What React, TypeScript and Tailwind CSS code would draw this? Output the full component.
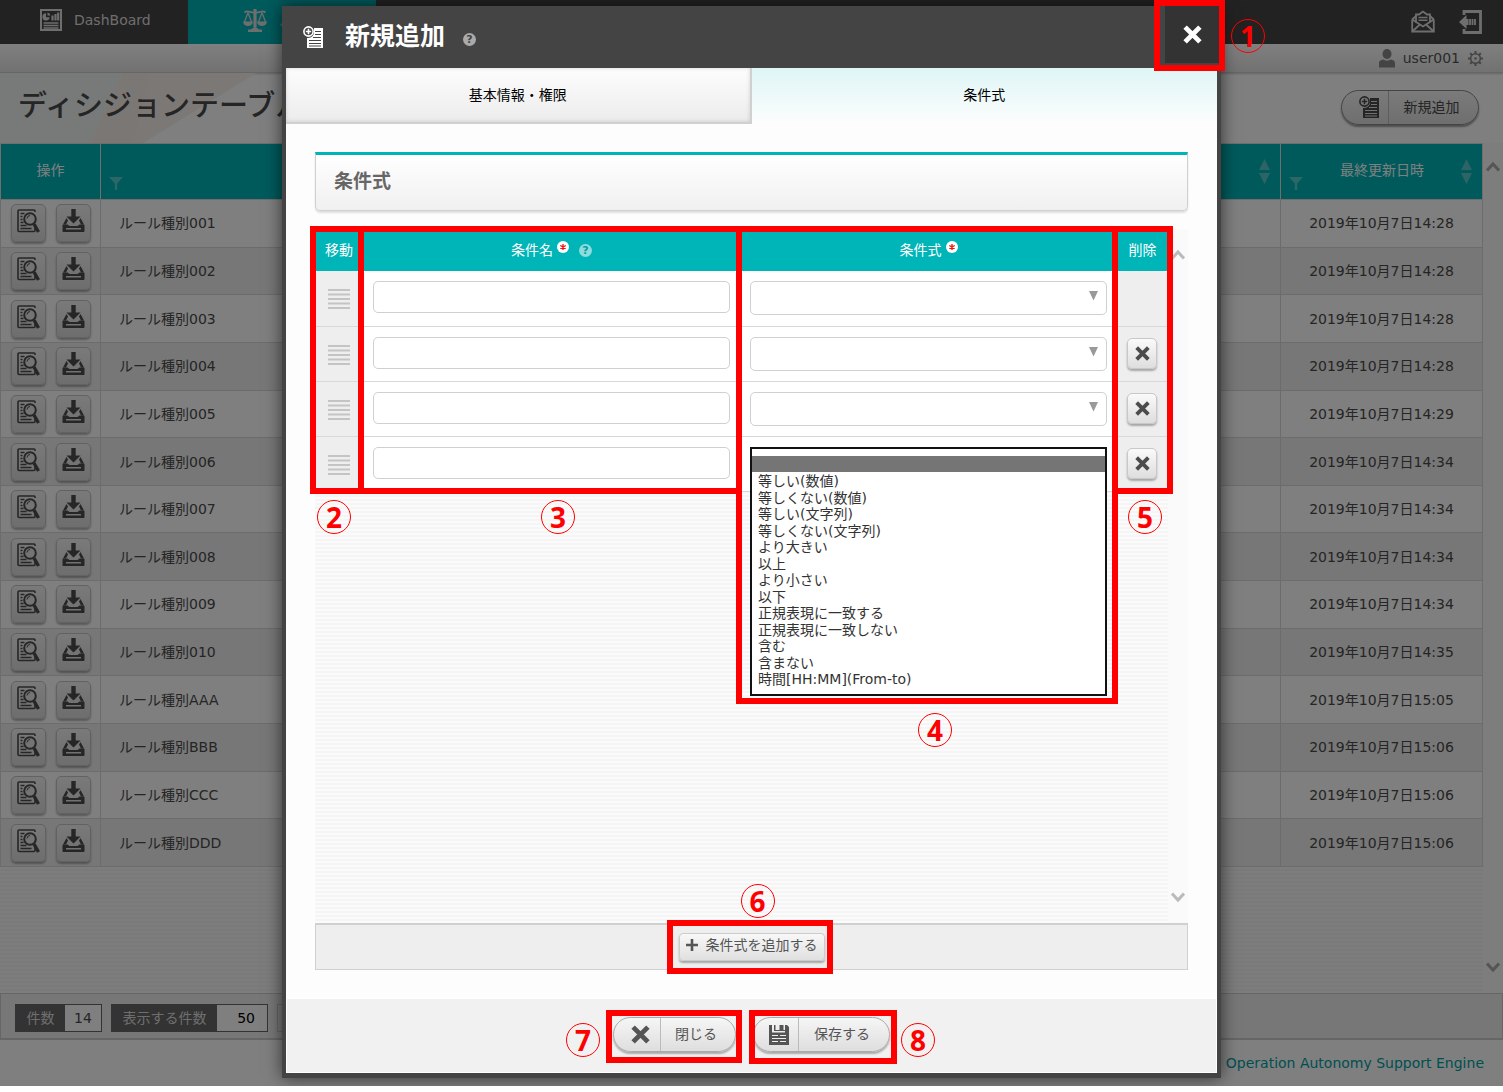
import React from "react";

const rows: [string, string][] = [
  ["001", "14:28"],
  ["002", "14:28"],
  ["003", "14:28"],
  ["004", "14:28"],
  ["005", "14:29"],
  ["006", "14:34"],
  ["007", "14:34"],
  ["008", "14:34"],
  ["009", "14:34"],
  ["010", "14:35"],
  ["AAA", "15:05"],
  ["BBB", "15:06"],
  ["CCC", "15:06"],
  ["DDD", "15:06"],
];

const operators = [
  "",
  "等しい(数値)",
  "等しくない(数値)",
  "等しい(文字列)",
  "等しくない(文字列)",
  "より大きい",
  "以上",
  "より小さい",
  "以下",
  "正規表現に一致する",
  "正規表現に一致しない",
  "含む",
  "含まない",
  "時間[HH:MM](From-to)",
];

function DashboardIcon() {
  return (
    <svg width="22" height="22" viewBox="0 0 22 22" fill="none" stroke="currentColor" aria-hidden="true">
      <rect x="1" y="1" width="20" height="20" strokeWidth="2" />
      <path d="M6 4.200a3.600 3.600 0 1 0 3.600 4H6z" fill="currentColor" stroke="none" />
      <path d="M7.500 3.400a3.200 3.200 0 0 1 2.800 3H7.500z" fill="currentColor" stroke="none" />
      <path d="M12.500 11.500V6.500M15.500 11.500V5M18.200 11.500V3.500" strokeWidth="2.200" />
      <path d="M3.500 14h15M3.500 16.500h15M3.500 19h15" strokeWidth="1.500" />
    </svg>
  );
}

function ScaleIcon() {
  return (
    <svg width="24" height="23" viewBox="0 0 24 23" fill="none" stroke="currentColor" aria-hidden="true">
      <path d="M12 0v18" strokeWidth="3.200" />
      <path d="M1.500 3.500c3-3 5.500.500 10.500 0 5 .500 7.500-3 10.500 0" strokeWidth="1.800" />
      <path d="M5 3.500 1.500 13M5 3.500 8.500 13M19 3.500 15.500 13M19 3.500 22.500 13" strokeWidth="1.300" />
      <path d="M0 12.500h10c-.5 6-9.500 6-10 0zM14 12.500h10c-.5 6-9.500 6-10 0z" fill="currentColor" stroke="none" />
      <path d="M5 23v-2.500h2.500c1.500 0 2.500-2.500 4.500-2.500s3 2.500 4.500 2.500H19V23z" fill="currentColor" stroke="none" />
    </svg>
  );
}

function AddListIcon({ line }: { line: string }) {
  return (
    <svg width="21" height="23" viewBox="0 0 21 23" fill="none" aria-hidden="true">
      <path d="M11 2h9v20H4V12h1a6 6 0 0 0 6-7z" fill="currentColor" />
      <path d="M12 5.500h6M12 8.500h6M10 11.500h8M6 14.500h12M6 17.500h12M6 20h12" stroke={line} strokeWidth="1.100" />
      <circle cx="5.500" cy="5.500" r="4.600" stroke="currentColor" strokeWidth="1.600" />
      <path d="M5.500 2.800v5.400M2.800 5.500h5.400" stroke="currentColor" strokeWidth="1.600" />
    </svg>
  );
}

function MailIcon() {
  return (
    <svg width="24" height="23" viewBox="0 0 24 23" fill="none" stroke="currentColor" strokeWidth="1.800" aria-hidden="true">
      <path d="M1.200 9.500v12h21.600v-12M1.200 9.500 5 6M22.800 9.500 19 6" />
      <path d="M5 12.500V4.500h3L12 1.500l4 3h3v8" />
      <path d="M1.200 9.500 12 16.500l10.800-7M1.200 21.500l7.800-7M22.800 21.500l-7.800-7" />
      <path d="M7.500 7.500h9M7.500 10.300h9" strokeWidth="1.400" />
    </svg>
  );
}

function LogoutIcon() {
  return (
    <svg width="23" height="24" viewBox="0 0 23 24" fill="none" aria-hidden="true">
      <path d="M5 5V1.500h16.500v21H5V19" stroke="currentColor" strokeWidth="2.800" />
      <path d="M0 12 7.500 5v4h2v6h-2v4z" fill="currentColor" />
      <path d="M11 9v6M13.500 9v6M16 9v6" stroke="currentColor" strokeWidth="1.800" />
    </svg>
  );
}

function UserIcon() {
  return (
    <svg width="16" height="19" viewBox="0 0 16 19" fill="currentColor" aria-hidden="true">
      <ellipse cx="8" cy="5" rx="4.500" ry="5" />
      <path d="M0 18.500v-4C0 11.500 2 11 4.500 10.500c2 1.600 5 1.600 7 0C14 11 16 11.500 16 14.500v4z" />
    </svg>
  );
}

function GearIcon() {
  return (
    <svg width="15" height="15" viewBox="0 0 15 15" fill="none" stroke="currentColor" aria-hidden="true">
      <circle cx="7.500" cy="7.500" r="4.800" strokeWidth="1.500" />
      <circle cx="7.500" cy="7.500" r="1.200" fill="currentColor" stroke="none" />
      <path
        d="M7.500 0v3M7.500 12v3M0 7.500h3M12 7.500h3M2.200 2.200l2 2M10.800 10.800l2 2M12.800 2.200l-2 2M4.200 10.800l-2 2"
        strokeWidth="2"
      />
    </svg>
  );
}

function DetailIcon() {
  return (
    <svg width="23" height="24" viewBox="0 0 23 24" fill="none" stroke="currentColor" aria-hidden="true">
      <path d="M18 18v3.500c0 .6-.4 1-1 1H2c-.6 0-1-.4-1-1V2c0-.6.4-1 1-1h15c.6 0 1 .4 1 1v1" strokeWidth="1.600" />
      <path d="M3.500 4.500h4M3.500 7.500h2M3.500 10.500h2M3.500 13.500h3M3.500 16.500h6M3.500 19.500h11" strokeWidth="1.400" />
      <circle cx="13" cy="10" r="5.800" fill="#e8e8e8" strokeWidth="2" />
      <path d="M10 9.500a3.200 3.200 0 0 1 3-3" strokeWidth="1" />
      <path d="m17 15 4.500 8" strokeWidth="3.400" />
    </svg>
  );
}

function DownloadIcon() {
  return (
    <svg width="23" height="24" viewBox="0 0 23 24" fill="currentColor" aria-hidden="true">
      <path d="M9.300 0h4.400v7.500h4.800l-7 7-7-7h4.800z" />
      <path d="M4.500 9 1 15.500h3L6 11.500zM18.500 9 22 15.500h-3L17 11.500z" />
      <path
        fillRule="evenodd"
        d="M1.500 15.500h4l2 1.500h8l2-1.500h4c.6 0 1 .4 1 1V22c0 .6-.4 1-1 1h-20c-.6 0-1-.4-1-1v-5.500c0-.6.4-1 1-1zM4 19v1.600h15V19z"
      />
    </svg>
  );
}

function FilterIcon() {
  return (
    <svg width="14" height="13" viewBox="0 0 14 13" fill="currentColor" aria-hidden="true">
      <path d="M0 0h14L8.200 6.500V13H5.800V6.500z" />
    </svg>
  );
}

function SortIcon() {
  return (
    <svg width="11" height="25" viewBox="0 0 11 25" fill="currentColor" aria-hidden="true">
      <path d="M5.500 0 11 11H0zM5.500 25 11 14H0z" />
    </svg>
  );
}

function ChevronIcon({ down = false }: { down?: boolean }) {
  return (
    <svg width="14" height="11" viewBox="0 0 14 11" fill="none" stroke="currentColor" strokeWidth="3" aria-hidden="true">
      <path d={down ? "M1 1.500 7 8l6-6.500" : "M1 9.500 7 3l6 6.500"} />
    </svg>
  );
}

function CrossIcon({ size }: { size: number }) {
  return (
    <svg width={size} height={size} viewBox="0 0 18 18" fill="none" stroke="currentColor" strokeWidth="4.600" aria-hidden="true">
      <path d="m2 2 14 14M16 2 2 16" />
    </svg>
  );
}

function SaveIcon() {
  return (
    <svg width="20" height="20" viewBox="0 0 20 20" aria-hidden="true">
      <path d="M0 0h3v7.500h13V0h2l2 2v18H0z" fill="currentColor" />
      <path d="M10.500 0h4v5.500h-4zM5 0h1.500v5.500H5z" fill="currentColor" />
      <path d="M5 5h11v1H5z" fill="currentColor" />
      <path d="M3 10.500h6M11 10.500h6M3 13.500h14M3 16.500h6M11 16.500h6" stroke="#eee" strokeWidth="1" />
    </svg>
  );
}

function GripIcon() {
  return (
    <svg width="22" height="20" viewBox="0 0 22 20" stroke="#c4c4c4" strokeWidth="2" aria-hidden="true">
      <path d="M0 1h22M0 5.500h22M0 10h22M0 14.500h22M0 19h22" />
    </svg>
  );
}

function Num({ n, className }: { n: number; className: string }) {
  return (
    <span
      className={`absolute flex size-[34px] items-center justify-center rounded-full border border-[#f00] font-['Open_Sans','Noto_Sans',sans-serif] text-[28px] leading-none font-bold text-[#f00] ${className}`}
    >
      {n}
    </span>
  );
}

function Mark({ n, box, num }: { n: number; box: string; num: string }) {
  return (
    <span className={`pointer-events-none absolute z-20 border-[6px] border-[#f00] ${box}`}>
      <Num n={n} className={num} />
    </span>
  );
}

function Help({ className }: { className: string }) {
  return (
    <span className={`flex size-[13px] items-center justify-center rounded-full text-[11px] leading-none font-bold ${className}`}>
      ?
    </span>
  );
}

function Required() {
  return (
    <svg width="12" height="12" viewBox="0 0 12 12" role="img" aria-label="必須">
      <circle cx="6" cy="6" r="6" fill="#fff" />
      <path d="M6 3v6M3.300 4.500l5.400 3M8.700 4.500l-5.400 3" stroke="#f01010" strokeWidth="1.300" />
    </svg>
  );
}

const iconButton =
  "flex items-center justify-center rounded-[5px] border border-[#c8c8c8] bg-linear-to-b from-[#fafafa] to-[#dedede] text-[#4c4c4c] shadow-[0_2px_2px_rgba(0,0,0,0.3)]";
const rowButton =
  "flex h-[38px] w-[35px] items-center justify-center rounded-[5px] border border-[#c4c4c4] bg-linear-to-b from-[#f4f4f4] to-[#dcdcdc] pb-1 text-[#4c4c4c] shadow-[0_2px_2px_rgba(0,0,0,0.3)]";
const pill =
  "flex h-[35px] w-full items-stretch rounded-full border border-[#aaa] bg-linear-to-b from-[#f6f6f6] to-[#dedede] text-sm text-[#555] shadow-[0_2px_2px_rgba(0,0,0,0.3)]";

function Background() {
  return (
    <div className="flex h-full flex-col bg-white text-[#4a4a4a]">
      <header className="flex h-11 shrink-0 items-stretch bg-[#444] text-sm text-[#ddd]">
        <a href="#dashboard" className="flex w-[188px] items-center gap-3 pb-1 pl-[40px]">
          <DashboardIcon />
          DashBoard
        </a>
        <a href="#rule" className="flex w-[188px] items-center gap-3 bg-[#00b5b8] pb-1 pl-[55px]">
          <ScaleIcon />
          ルール
        </a>
        <nav className="ml-auto flex items-center gap-6 pr-[21px] pb-px">
          <button type="button" aria-label="お知らせ">
            <MailIcon />
          </button>
          <button type="button" aria-label="ログアウト">
            <LogoutIcon />
          </button>
        </nav>
      </header>
      <div className="flex h-[29px] shrink-0 items-center justify-end gap-2 border-b border-[#ccc] bg-linear-to-b from-white to-[#e4e4e4] pr-5 text-sm text-[#555] shadow-[0_1px_2px_rgba(0,0,0,0.2)]">
        <span className="text-[#888]">
          <UserIcon />
        </span>
        user001
        <button type="button" aria-label="設定" className="text-[#888]">
          <GearIcon />
        </button>
      </div>
      <div className="relative flex h-[70px] shrink-0 items-center justify-between pr-6 pl-[18px]">
        <svg className="absolute top-0 left-0" width="260" height="70" viewBox="0 0 260 70" aria-hidden="true">
          <path d="M0 0h123L90 70H0z" fill="#eff4f3" />
          <path d="M123 0h133L143 70H90z" fill="#f6eeea" />
          <path d="M150 0h106L143 70h-10z" fill="#f9f1ed" />
        </svg>
        <h1 className="relative pb-1 text-[29px] leading-10 font-medium whitespace-nowrap">ディシジョンテーブル</h1>
        <button
          type="button"
          className="mb-px flex h-[35px] w-[138px] items-stretch rounded-full border border-[#888] bg-linear-to-b from-[#f6f6f6] to-[#dedede] text-sm shadow-[0_2px_2px_rgba(0,0,0,0.4)]"
        >
          <span className="flex w-[47px] items-center justify-center border-r border-[#bbb] pl-2">
            <AddListIcon line="#e4e4e4" />
          </span>
          <span className="flex flex-1 items-center justify-center pr-1 pb-0.5">新規追加</span>
        </button>
      </div>
      <div className="flex min-h-0 flex-1">
        <div className="flex-1 bg-[repeating-linear-gradient(#fbfbfb_0_2px,#f5f5f5_2px_4px)]">
          <table className="h-[724px] w-full table-fixed border-collapse text-sm">
            <colgroup>
              <col className="w-[100px]" />
              <col />
              <col className="w-[250px]" />
              <col className="w-[202px]" />
            </colgroup>
            <thead>
              <tr className="h-14 bg-[#00b5b8] text-white">
                <th className="border border-[#ddd] pt-0 pb-1 font-normal">操作</th>
                <th className="border border-[#ddd] pl-2 font-normal">
                  <span className="flex h-9 items-end text-[#7fd8da]/70">
                    <FilterIcon />
                  </span>
                </th>
                <th className="border border-[#ddd] pr-2.5 font-normal">
                  <span className="flex justify-end text-[#80d0d2]/70">
                    <SortIcon />
                  </span>
                </th>
                <th className="border border-[#ddd] pr-2.5 pl-2 font-normal">
                  <span className="flex items-center justify-between">
                    <span className="flex h-9 items-end text-[#7fd8da]/70">
                      <FilterIcon />
                    </span>
                    <span className="pb-1">最終更新日時</span>
                    <span className="text-[#80d0d2]/70">
                      <SortIcon />
                    </span>
                  </span>
                </th>
              </tr>
            </thead>
            <tbody>
              {rows.map(([name, time]) => (
                <tr key={name} className="bg-white even:bg-[#eee]">
                  <td className="border border-[#d8d8d8] p-0">
                    <span className="flex justify-center gap-[10px]">
                      <button type="button" aria-label="詳細" className={rowButton}>
                        <DetailIcon />
                      </button>
                      <button type="button" aria-label="ダウンロード" className={rowButton}>
                        <DownloadIcon />
                      </button>
                    </span>
                  </td>
                  <td className="border border-[#d8d8d8] px-[18px] py-0">ルール種別{name}</td>
                  <td className="border border-[#d8d8d8] p-0" />
                  <td className="border border-[#d8d8d8] p-0 text-center">2019年10月7日{time}</td>
                </tr>
              ))}
            </tbody>
          </table>
        </div>
        <div className="flex w-5 flex-col items-center justify-between bg-[#fafafa] pt-[18px] pb-5 text-[#aaa]">
          <ChevronIcon />
          <ChevronIcon down />
        </div>
      </div>
      <div className="flex h-[47px] shrink-0 items-center gap-[9px] border border-b-2 border-[#ccc] bg-[#eee] pt-1 pl-3.5 text-sm">
        <div className="flex h-7 border border-[#666]">
          <span className="flex w-[49px] items-center justify-center bg-[#666] text-[#ddd]">件数</span>
          <span className="flex w-[36px] items-center justify-center bg-white">14</span>
        </div>
        <div className="flex h-7 border border-[#666]">
          <label htmlFor="page-size" className="flex w-[105px] items-center justify-center bg-[#666] text-[#ddd]">
            表示する件数
          </label>
          <input id="page-size" className="w-[50px] bg-white pr-3 text-right text-black" defaultValue="50" />
        </div>
        <div className="h-7 w-12 border border-[#ccc]" />
      </div>
      <footer className="flex h-[46px] shrink-0 items-center justify-end pr-[19px] text-sm">
        <a href="#oase" className="text-[#00a0a2]">
          Operation Autonomy Support Engine
        </a>
      </footer>
    </div>
  );
}

function ConditionTable() {
  return (
    <table className="w-full table-fixed border-collapse bg-white text-sm">
      <colgroup>
        <col className="w-12" />
        <col />
        <col />
        <col className="w-[51px]" />
      </colgroup>
      <thead>
        <tr className="h-[42px] bg-[#00b5b8] text-white">
          <th className="relative p-0 font-normal">
            移動
            <Mark n={2} box="-top-[3px] -right-px -left-[5px] h-[268px]" num="top-[268px] left-px" />
          </th>
          <th className="relative p-0 font-normal">
            <span className="flex items-center justify-center gap-1">
              条件名
              <span className="mb-1.5">
                <Required />
              </span>
              <Help className="ml-1.5 bg-[#8edcdd] text-[#00a0a3]" />
            </span>
            <Mark n={3} box="-top-[3px] -right-[2px] -left-[5px] h-[268px]" num="top-[268px] left-[177px]" />
          </th>
          <th className="relative p-0 font-normal">
            <span className="flex items-center justify-center gap-1">
              条件式
              <span className="mb-1.5">
                <Required />
              </span>
            </span>
            <Mark n={4} box="-top-[3px] -right-px -left-[4px] h-[478px]" num="top-[481px] left-[176px]" />
          </th>
          <th className="relative p-0 font-normal">
            削除
            <Mark n={5} box="-top-[3px] -right-[5px] -left-[5px] h-[268px]" num="top-[268px] left-[10px]" />
          </th>
        </tr>
      </thead>
      <tbody>
        {[1, 2, 3, 4].map((i) => (
          <tr key={i} className="h-[55px] border-b border-[#d8d8d8]">
            <td className="bg-[#eee] p-0 pt-0.5">
              <span className="flex justify-center">
                <GripIcon />
              </span>
            </td>
            <td className="px-2.5 pt-2.5 pb-0 align-top">
              <input
                aria-label={`条件名 ${i}`}
                className="block h-8 w-full rounded-[5px] border border-[#d0d0d0] bg-white px-2 outline-none"
              />
            </td>
            <td className="relative px-2.5 pt-2.5 pb-0 align-top">
              {i < 4 ? (
                <span className="relative block">
                  <select
                    aria-label={`条件式 ${i}`}
                    className="block h-[34px] w-full appearance-none rounded-[5px] border border-[#d0d0d0] bg-white px-2 outline-none"
                  >
                    {operators.map((o) => (
                      <option key={o}>{o}</option>
                    ))}
                  </select>
                  <svg className="pointer-events-none absolute top-[10px] right-[9px]" width="9" height="10" viewBox="0 0 9 10" aria-hidden="true">
                    <path d="M0 0h9L4.500 9.500z" fill="#999" />
                  </svg>
                </span>
              ) : (
                <select
                  aria-label={`条件式 ${i}`}
                  size={14}
                  defaultValue=""
                  className="absolute inset-x-2.5 top-2.5 z-10 h-[249px] overflow-hidden border-2 border-[#111] bg-white pt-[7px] text-sm text-[#333] outline-none"
                >
                  {operators.map((o) => (
                    <option
                      key={o}
                      value={o}
                      className="flex min-h-0 items-center px-1.5 py-0 leading-4 checked:bg-[linear-gradient(#757575,#757575)] odd:h-4 even:h-[17px]"
                    >
                      {o}
                    </option>
                  ))}
                </select>
              )}
            </td>
            <td className="bg-[#eee] px-2.5 py-0">
              {i > 1 && (
                <button type="button" aria-label={`削除 ${i}`} className={`h-[31px] w-[30px] pb-px ${iconButton}`}>
                  <CrossIcon size={15} />
                </button>
              )}
            </td>
          </tr>
        ))}
      </tbody>
    </table>
  );
}

function Modal() {
  return (
    <section
      role="dialog"
      aria-label="新規追加"
      className="flex h-full w-full max-w-[939px] flex-col border-x-4 border-b-[5px] border-[#444] bg-[#fdfdfd] shadow-[0_0_16px_rgba(0,0,0,0.6)]"
    >
      <header className="flex h-[62px] shrink-0 items-center bg-[#444] pl-[17px] text-white">
        <AddListIcon line="#444" />
        <h2 className="ml-[21px] text-[25px] leading-8 font-bold">新規追加</h2>
        <Help className="mt-1 ml-[18px] bg-[#aaa] text-[#444]" />
        <div className="relative mr-[-2px] ml-auto h-[62px] w-[54px]">
          <button type="button" aria-label="閉じる" className="flex h-[57px] w-full items-center justify-center bg-[#333]">
            <CrossIcon size={19} />
          </button>
          <Mark n={1} box="-top-[6px] -right-[6px] -left-[11px] h-[71px]" num="top-[13px] left-[71px]" />
        </div>
      </header>
      <div className="grid h-14 shrink-0 grid-cols-2 text-sm text-black">
        <button
          type="button"
          className="border-r-2 border-b-2 border-[#d0d0d0] bg-linear-to-b from-[#fdfdfd] to-[#ececec] shadow-[inset_0_0_4px_rgba(0,0,0,0.15)]"
        >
          基本情報・権限
        </button>
        <button type="button" className="bg-linear-to-b from-[#def5f6] to-[#fdfdfd] pb-0.5">
          条件式
        </button>
      </div>
      <div className="flex min-h-0 flex-1 flex-col px-[29px] py-7">
        <h3 className="flex h-[59px] shrink-0 items-center rounded-b-[5px] border border-t-[3px] border-[#d0d0d0] border-t-[#00b5b8] bg-linear-to-b from-white to-[#f0f0f0] pb-0.5 pl-[18px] text-[19px] font-bold text-[#666] shadow-[0_2px_2px_rgba(0,0,0,0.12)]">
          条件式
        </h3>
        <div className="mt-[18px] flex min-h-0 flex-1">
          <div className="flex-1 bg-[repeating-linear-gradient(#fbfbfb_0_2px,#f5f5f5_2px_4px)]">
            <ConditionTable />
          </div>
          <div className="flex w-5 flex-col items-center justify-between bg-[#fafafa] pt-5 pb-5 text-[#bbb]">
            <ChevronIcon />
            <ChevronIcon down />
          </div>
        </div>
        <div className="flex h-[47px] shrink-0 items-center justify-center border border-t-2 border-[#d0d0d0] bg-[#eee]">
          <div className="relative">
            <button
              type="button"
              className="flex h-7 w-[146px] items-center justify-center gap-2 rounded-[4px] border border-[#ccc] bg-linear-to-b from-[#f8f8f8] to-[#e0e0e0] pb-1 text-sm text-[#555] shadow-[0_2px_2px_rgba(0,0,0,0.3)]"
            >
              <svg width="12" height="12" viewBox="0 0 12 12" stroke="currentColor" strokeWidth="2.600" aria-hidden="true">
                <path d="M6 0v12M0 6h12" />
              </svg>
              条件式を追加する
            </button>
            <Mark n={6} box="-top-[13px] -right-[8px] -left-[12px] h-[54px]" num="-top-[42px] left-[68px]" />
          </div>
        </div>
      </div>
      <footer className="flex h-[75px] shrink-0 items-start justify-center gap-[17px] border border-white bg-[#f1f1f1] pt-[18px]">
        <div className="relative w-[123px]">
          <button type="button" className={pill}>
            <span className="flex w-[47px] items-center justify-center border-r border-[#bbb] pl-1.5">
              <CrossIcon size={19} />
            </span>
            <span className="flex flex-1 items-center justify-center pr-1 pb-0.5">閉じる</span>
          </button>
          <Mark n={7} box="-top-[7px] -right-[6px] -left-[7px] h-[53px]" num="top-[7px] -left-[46px]" />
        </div>
        <div className="relative w-[137px]">
          <button type="button" className={pill}>
            <span className="flex w-[45px] items-center justify-center border-r border-[#bbb] pl-1.5">
              <SaveIcon />
            </span>
            <span className="flex flex-1 items-center justify-center pr-1 pb-0.5">保存する</span>
          </button>
          <Mark n={8} box="-top-[7px] -right-[7px] -left-[4px] h-[54px]" num="top-[7px] left-[146px]" />
        </div>
      </footer>
    </section>
  );
}

export default function App() {
  return (
    <div className="h-screen min-h-[1000px] bg-white pb-1.5 font-['DejaVu_Sans','Noto_Sans_CJK_JP',sans-serif]" lang="ja">
      <div className="relative h-full overflow-hidden">
        <Background />
        <div className="absolute inset-0 flex justify-center bg-black/50 pt-1.5 pb-2">
          <Modal />
        </div>
      </div>
    </div>
  );
}
